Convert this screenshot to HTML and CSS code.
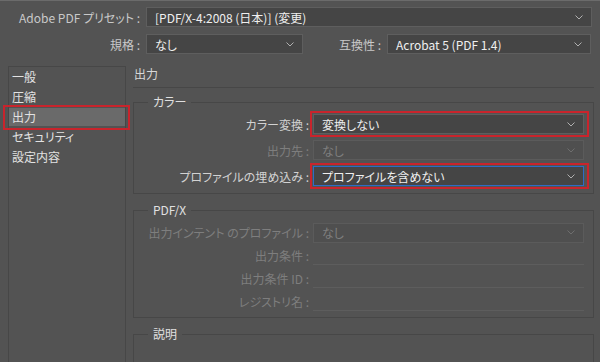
FILE: index.html
```html
<!DOCTYPE html>
<html lang="ja">
<head>
  <meta charset="UTF-8" />
  <meta name="viewport" content="width=device-width, initial-scale=1.0"/>
  <title>Adobe PDF を書き出し - 出力</title>
  <link rel="stylesheet" href="styles.css">
</head>
<body>

  <div class="preset">
    <div class="head-row">
      <label class="head-label">Adobe PDF プリセット :</label>
      <div class="select preset-select">
        <span>[PDF/X-4:2008 (日本)] (変更)</span>
        <svg class="chev" width="8" height="5" viewBox="0 0 8 5"><polyline points="0.5,0.5 4,4 7.5,0.5"/></svg>
      </div>
    </div>
    <div class="head-row">
      <label class="head-label">規格 :</label>
      <div class="select std-select">
        <span>なし</span>
        <svg class="chev" width="8" height="5" viewBox="0 0 8 5"><polyline points="0.5,0.5 4,4 7.5,0.5"/></svg>
      </div>
      <label class="compat-label">互換性 :</label>
      <div class="select compat-select">
        <span>Acrobat 5 (PDF 1.4)</span>
        <svg class="chev" width="8" height="5" viewBox="0 0 8 5"><polyline points="0.5,0.5 4,4 7.5,0.5"/></svg>
      </div>
    </div>
  </div>

  <div class="main">
    <ul class="sidebar">
      <li>一般</li>
      <li>圧縮</li>
      <li class="active">出力</li>
      <li>セキュリティ</li>
      <li>設定内容</li>
    </ul>

    <div class="panel">
      <div class="panel-title">出力</div>

      <fieldset class="group">
        <legend>カラー</legend>
        <div class="form-row">
          <label>カラー変換 :</label>
          <div class="select marked">
            <span>変換しない</span>
            <svg class="chev" width="8" height="5" viewBox="0 0 8 5"><polyline points="0.5,0.5 4,4 7.5,0.5"/></svg>
          </div>
        </div>
        <div class="form-row disabled">
          <label>出力先 :</label>
          <div class="select">
            <span>なし</span>
            <svg class="chev" width="8" height="5" viewBox="0 0 8 5"><polyline points="0.5,0.5 4,4 7.5,0.5"/></svg>
          </div>
        </div>
        <div class="form-row">
          <label>プロファイルの埋め込み :</label>
          <div class="select marked focused">
            <span>プロファイルを含めない</span>
            <svg class="chev" width="8" height="5" viewBox="0 0 8 5"><polyline points="0.5,0.5 4,4 7.5,0.5"/></svg>
          </div>
        </div>
      </fieldset>

      <fieldset class="group pdfx">
        <legend>PDF/X</legend>
        <div class="form-row disabled">
          <label>出力インテント のプロファイル :</label>
          <div class="select">
            <span>なし</span>
            <svg class="chev" width="8" height="5" viewBox="0 0 8 5"><polyline points="0.5,0.5 4,4 7.5,0.5"/></svg>
          </div>
        </div>
        <div class="form-row disabled text-row">
          <label>出力条件 :</label>
          <div class="text-field"></div>
        </div>
        <div class="form-row disabled text-row">
          <label>出力条件 ID :</label>
          <div class="text-field"></div>
        </div>
        <div class="form-row disabled text-row">
          <label>レジストリ名 :</label>
          <div class="text-field"></div>
        </div>
      </fieldset>

      <fieldset class="group desc">
        <legend>説明</legend>
      </fieldset>
    </div>
  </div>

</body>
</html>
```

FILE: styles.css
```css
html, body {
  margin: 0;
  padding: 0;
  height: 100%;
  overflow: hidden;
}

body {
  background: #535353;
  border-top: 1px solid #6b6b6b;
  font-family: "Noto Sans CJK JP", "Noto Sans", sans-serif;
  font-size: 12px;
  font-feature-settings: "palt";
  color: #d2d2d2;
}

/* top preset rows */
.preset {
  padding: 6px 8px 0 0;
}

.head-row {
  display: flex;
  align-items: center;
  height: 20px;
  margin-bottom: 7px;
}

.head-row:last-child {
  margin-bottom: 0;
}

.head-label {
  width: 140px;
  text-align: right;
  margin-right: 6px;
  color: #c9c9c9;
}

.compat-label {
  width: 78px;
  text-align: right;
  margin-right: 6px;
  color: #c9c9c9;
}

.select {
  position: relative;
  box-sizing: border-box;
  height: 20px;
  display: flex;
  align-items: center;
  justify-content: space-between;
  padding: 0 8px 0 8px;
  background: #454545;
  border: 1px solid #5e5e5e;
  color: #efefef;
  white-space: nowrap;
}

.select .chev polyline {
  fill: none;
  stroke: #b0b0b0;
  stroke-width: 1;
}

.preset-select {
  flex: 1;
}

.std-select {
  width: 157px;
}

.compat-select {
  flex: 1;
  margin-right: 1px;
}

/* main area */
.main {
  display: flex;
  margin-top: 12px;
}

.sidebar {
  list-style: none;
  margin: 0 0 0 8px;
  padding: 1px 0 0;
  width: 116px;
  height: 300px;
  border: 1px solid #474747;
}

.sidebar li {
  position: relative;
  height: 18px;
  line-height: 18px;
  margin-bottom: 2px;
  padding-left: 3px;
  color: #e2e2e2;
}

.sidebar li.active {
  background: #6a6a6a;
}

.sidebar li.active::after {
  content: "";
  position: absolute;
  left: -6px;
  right: -5px;
  top: -3px;
  bottom: -4px;
  border: 2px solid #c9242c;
}

.panel {
  flex: 1;
  margin: 0 6px 0 7px;
}

.panel-title {
  line-height: 16px;
  padding: 0 0 5px 1px;
  border-bottom: 1px solid #474747;
  color: #d8d8d8;
}

.group {
  margin: 6px 0 0;
  padding: 0 9px 7px 0;
  border: 1px solid #474747;
  min-width: 0;
}

.group legend {
  margin-left: 14px;
  padding: 0 5px;
  line-height: 16px;
  color: #e0e0e0;
}

.form-row {
  display: flex;
  align-items: center;
  height: 20px;
  margin-top: 6px;
}

.form-row:first-of-type {
  margin-top: 4px;
}

.form-row label {
  width: 175px;
  text-align: right;
  margin-right: 4px;
  white-space: nowrap;
}

.form-row .select {
  flex: 1;
}

.select.marked::after {
  content: "";
  position: absolute;
  left: -4px;
  right: -6px;
  top: -4px;
  bottom: -4px;
  border: 2px solid #c9242c;
}

.select.focused {
  border-color: #2e6bc6;
}

.form-row.disabled label {
  color: #7e7e7e;
}

.form-row.disabled .select {
  background: #4f4f4f;
  border-color: #5b5b5b;
  color: #7f7f7f;
}

.form-row.disabled .select .chev polyline {
  stroke: #6e6e6e;
}

.pdfx {
  margin-top: 8px;
  padding-bottom: 6px;
}

.pdfx .form-row:first-of-type {
  margin-top: 5px;
  height: 19px;
}

.text-row {
  margin-top: 3px;
}

.text-field {
  flex: 1;
  align-self: stretch;
  border-bottom: 1px solid #5d5d5d;
}

.desc {
  margin-top: 8px;
  height: 60px;
}
```
